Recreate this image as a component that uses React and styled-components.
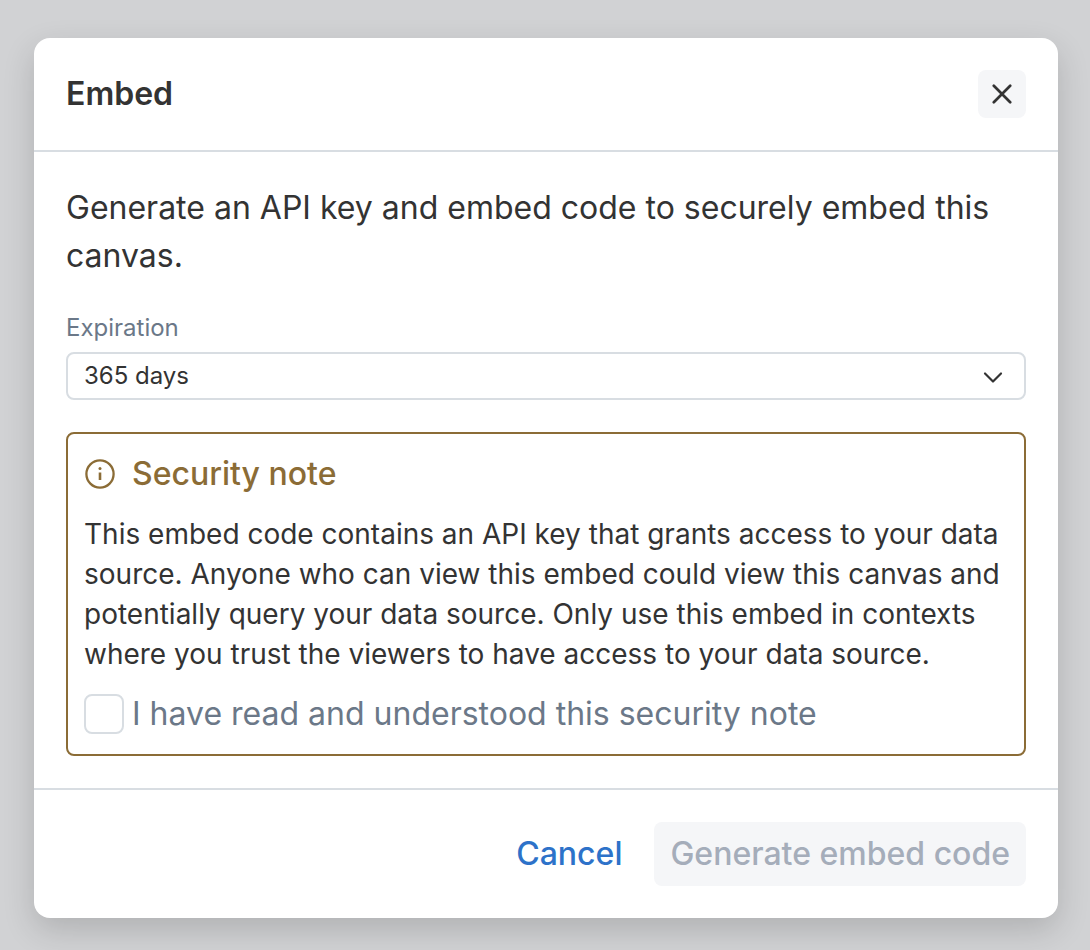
import React, { useState } from 'react';
import styled, { createGlobalStyle } from 'styled-components';

const GlobalStyle = createGlobalStyle`
  *, *::before, *::after { box-sizing: border-box; }
  body {
    margin: 0;
    background: #d1d2d4;
    color: #333333;
    font-family: Inter, "Liberation Sans", sans-serif;
  }
  button, select, input { font: inherit; color: inherit; }
`;

const Backdrop = styled.main`
  min-height: 100vh;
  padding: 38px 32px 32px 34px;
`;

const Dialog = styled.section`
  background: #fff;
  border-radius: 16px;
  box-shadow: 0 12px 32px rgba(0, 0, 0, 0.16);
`;

const Header = styled.header`
  display: flex;
  align-items: center;
  justify-content: space-between;
  padding: 32px;
  border-bottom: 2px solid #d8dde2;
`;

const Title = styled.h1`
  margin: 0;
  font-size: 32px;
  line-height: 48px;
  font-weight: 600;
`;

const CloseButton = styled.button`
  display: grid;
  place-items: center;
  width: 48px;
  height: 48px;
  padding: 0;
  border: 0;
  border-radius: 8px;
  background: #f5f6f8;
`;

const Body = styled.div`
  display: flex;
  flex-direction: column;
  gap: 32px;
  padding: 32px;
`;

const Intro = styled.p`
  margin: 0;
  font-size: 32px;
  line-height: 48px;
`;

const Field = styled.div`
  display: flex;
  flex-direction: column;
  gap: 8px;
`;

const FieldLabel = styled.label`
  font-size: 24px;
  line-height: 32px;
  color: #6b7888;
`;

const SelectBox = styled.div`
  display: grid;
  align-items: center;
  > * { grid-area: 1 / 1; }
  > svg { justify-self: end; margin-right: 20px; pointer-events: none; }
`;

const Select = styled.select`
  appearance: none;
  width: 100%;
  height: 48px;
  padding: 0 16px 2px;
  border: 2px solid #d8dde2;
  border-radius: 8px;
  background: #fff;
  font-size: 24px;
`;

const Note = styled.section`
  display: flex;
  flex-direction: column;
  gap: 16px;
  padding: 16px;
  border: 2px solid #8b6c36;
  border-radius: 8px;
`;

const NoteTitle = styled.h2`
  display: flex;
  align-items: center;
  gap: 16px;
  margin: 0;
  color: #8b6c36;
  font-size: 32px;
  line-height: 48px;
  font-weight: 500;
`;

const NoteText = styled.p`
  margin: 0;
  font-size: 28px;
  line-height: 40px;
`;

const CheckLabel = styled.label`
  display: flex;
  align-items: center;
  gap: 8px;
  color: #6b7888;
  font-size: 32px;
  line-height: 48px;
`;

const Checkbox = styled.input`
  appearance: none;
  flex: none;
  width: 40px;
  height: 40px;
  margin: 0;
  border: 2px solid #d8dde2;
  border-radius: 8px;
  background: #fff;
  &:checked { background: #2d72c9; }
`;

const Footer = styled.footer`
  display: flex;
  justify-content: flex-end;
  gap: 16px;
  padding: 32px;
  border-top: 2px solid #d8dde2;
`;

const Action = styled.button`
  padding: 8px 16px;
  line-height: 48px;
  border: 0;
  border-radius: 8px;
  background: ${(p) => (p.$filled ? '#f5f6f8' : 'transparent')};
  color: ${(p) => (p.$filled ? '#a5adba' : '#2d72c9')};
  font-size: 32px;
  font-weight: 500;
`;

const CloseIcon = () => (
  <svg width="20" height="20" viewBox="0 0 20 20" fill="none" stroke="#333333" strokeWidth="2.7" strokeLinecap="round" aria-hidden="true">
    <path d="M1.800 1.800 18.200 18.200M18.200 1.800 1.800 18.200" />
  </svg>
);

const ChevronIcon = () => (
  <svg width="24" height="24" viewBox="0 0 24 24" fill="none" stroke="#333333" strokeWidth="2.200" strokeLinecap="round" strokeLinejoin="round" aria-hidden="true">
    <path d="m3 9.500 8 8 8-8" />
  </svg>
);

const InfoIcon = () => (
  <svg width="32" height="32" viewBox="0 0 32 32" fill="none" stroke="#8b6c36" strokeWidth="2.300" aria-hidden="true">
    <circle cx="16" cy="16" r="13.600" />
    <path d="M16 14.500v7.500" strokeWidth="2.600" />
    <circle cx="16" cy="10.500" r="1.500" fill="#8b6c36" stroke="none" />
  </svg>
);

export default function App() {
  const [accepted, setAccepted] = useState(false);
  return (
    <>
      <GlobalStyle />
      <Backdrop>
        <Dialog role="dialog" aria-labelledby="embed-title">
          <Header>
            <Title id="embed-title">Embed</Title>
            <CloseButton type="button" aria-label="Close"><CloseIcon /></CloseButton>
          </Header>
          <Body>
            <Intro>Generate an API key and embed code to securely embed this canvas.</Intro>
            <Field>
              <FieldLabel htmlFor="expiration">Expiration</FieldLabel>
              <SelectBox>
                <Select id="expiration" defaultValue="365">
                  <option value="365">365 days</option>
                </Select>
                <ChevronIcon />
              </SelectBox>
            </Field>
            <Note>
              <NoteTitle><InfoIcon />Security note</NoteTitle>
              <NoteText>
                This embed code contains an API key that grants access to your data source. Anyone who
                can view this embed could view this canvas and potentially query your data source. Only
                use this embed in contexts where you trust the viewers to have access to your data source.
              </NoteText>
              <CheckLabel>
                <Checkbox type="checkbox" checked={accepted} onChange={(e) => setAccepted(e.target.checked)} />
                I have read and understood this security note
              </CheckLabel>
            </Note>
          </Body>
          <Footer>
            <Action type="button">Cancel</Action>
            <Action type="button" $filled disabled={!accepted}>Generate embed code</Action>
          </Footer>
        </Dialog>
      </Backdrop>
    </>
  );
}
